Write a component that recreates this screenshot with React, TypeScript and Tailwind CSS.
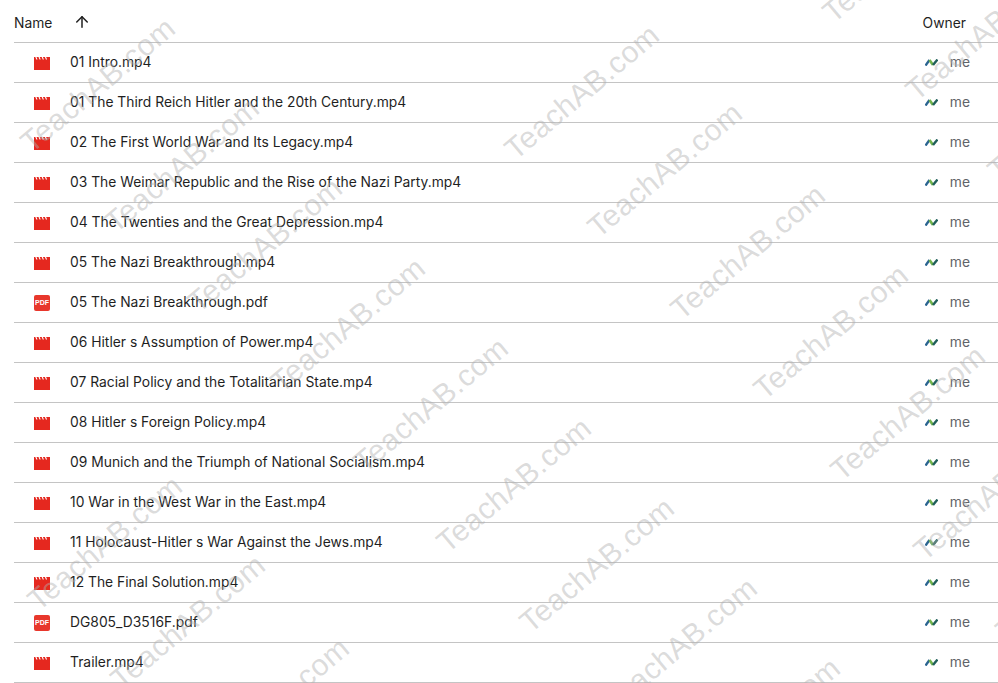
import { ArrowUp } from "lucide-react";

type FileRow = { name: string; kind: "video" | "pdf" };

const files: FileRow[] = [
  { name: "01 Intro.mp4", kind: "video" },
  { name: "01 The Third Reich Hitler and the 20th Century.mp4", kind: "video" },
  { name: "02 The First World War and Its Legacy.mp4", kind: "video" },
  { name: "03 The Weimar Republic and the Rise of the Nazi Party.mp4", kind: "video" },
  { name: "04 The Twenties and the Great Depression.mp4", kind: "video" },
  { name: "05 The Nazi Breakthrough.mp4", kind: "video" },
  { name: "05 The Nazi Breakthrough.pdf", kind: "pdf" },
  { name: "06 Hitler s Assumption of Power.mp4", kind: "video" },
  { name: "07 Racial Policy and the Totalitarian State.mp4", kind: "video" },
  { name: "08 Hitler s Foreign Policy.mp4", kind: "video" },
  { name: "09 Munich and the Triumph of National Socialism.mp4", kind: "video" },
  { name: "10 War in the West War in the East.mp4", kind: "video" },
  { name: "11 Holocaust-Hitler s War Against the Jews.mp4", kind: "video" },
  { name: "12 The Final Solution.mp4", kind: "video" },
  { name: "DG805_D3516F.pdf", kind: "pdf" },
  { name: "Trailer.mp4", kind: "video" },
];

// watermark centres, read off the picture
const marks = [
  [98, 85], [182, 165], [265, 245], [348, 325], [431, 405], [514, 485], [597, 565], [680, 645], [763, 725],
  [582, 92], [665, 170], [748, 252], [831, 332], [908, 413], [991, 493], [1073, 573],
  [105, 543], [188, 622], [272, 705],
  [900, -45], [983, 33], [1065, 113],
];

function VideoIcon() {
  return (
    <svg width="16" height="13" viewBox="0 0 16 13" className="mt-px shrink-0">
      <path
        fill="#e5281f"
        d="M0 0h1.300l1 2.600h1.200L2.500 0h2l1 2.600h1.200L5.700 0h2l1 2.600h1.200L8.900 0h2l1 2.600h1.200L12.100 0H16v13H0z"
      />
    </svg>
  );
}

function PdfIcon() {
  return (
    <div className="flex h-4 w-4 shrink-0 items-center justify-center rounded-[2px] bg-[#e8372c] font-['Liberation_Sans',sans-serif] text-[7px] leading-none font-bold text-white">
      PDF
    </div>
  );
}

function OwnerAvatar() {
  return (
    <svg width="13" height="7" viewBox="0 0 13 7" className="shrink-0">
      <path d="M.5 6.500 4.500 1" stroke="#2a6490" strokeWidth="2.400" />
      <path d="M4.500 1 8 6" stroke="#6fb24a" strokeWidth="2.600" />
      <path d="M8 6 12.500 .5" stroke="#1f5f5a" strokeWidth="2.400" />
    </svg>
  );
}

export default function App() {
  return (
    <div className="relative h-[683px] w-[998px] overflow-hidden bg-white font-['Inter',sans-serif] text-[13.85px] text-[#1f1f1f]">
      <div className="ml-[14px] flex h-[43px] items-center border-b border-[#c4c4c4] pt-[4px]">
        <span className="w-[59px]">Name</span>
        <ArrowUp size={18} strokeWidth={2} className="mb-[3px] text-[#1f1f1f]" />
        <span className="mr-[32px] ml-auto">Owner</span>
      </div>
      {files.map((f) => (
        <div key={f.name} className="ml-[14px] flex h-10 items-center border-b border-[#c4c4c4]">
          <div className="flex w-[56px] justify-start pl-[20px]">
            {f.kind === "video" ? <VideoIcon /> : <PdfIcon />}
          </div>
          <span className="whitespace-nowrap">{f.name}</span>
          <div className="mr-[28px] ml-auto flex items-center gap-[12px] text-[#5f6368]">
            <OwnerAvatar />
            <span>me</span>
          </div>
        </div>
      ))}
      {marks.map(([x, y]) => (
        <span
          key={`${x}-${y}`}
          className="pointer-events-none absolute -translate-x-1/2 -translate-y-1/2 -rotate-[40deg] font-['Liberation_Sans',sans-serif] text-[30px] leading-none tracking-[0.5px] whitespace-nowrap text-[#b0b0b0]/45"
          style={{ left: x, top: y }}
        >
          TeachAB.com
        </span>
      ))}
    </div>
  );
}
